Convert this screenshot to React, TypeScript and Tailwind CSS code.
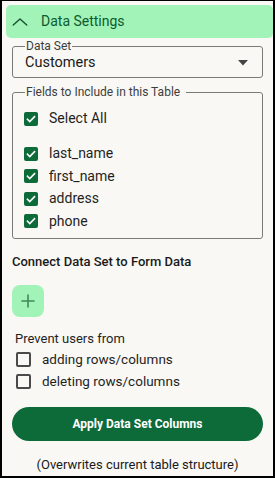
import { useState } from "react";

type Field = {
  name: string;
  checked: boolean;
};

function CheckBox({ checked }: { checked: boolean }) {
  if (checked) {
    return (
      <span className="flex h-[14px] w-[14px] items-center justify-center rounded-[2px] bg-[#0d6b3a]">
        <svg width="12" height="12" viewBox="0 0 24 24" fill="none" stroke="white" strokeWidth="3.2" strokeLinecap="square">
          <path d="M5 12.5l4.5 4.5L19 7.5" />
        </svg>
      </span>
    );
  }
  return <span className="block h-[15px] w-[15px] rounded-[2px] border-2 border-[#4a4a4a] bg-transparent" />;
}

function App() {
  const [fields] = useState<Field[]>([
    { name: "last_name", checked: true },
    { name: "first_name", checked: true },
    { name: "address", checked: true },
    { name: "phone", checked: true },
  ]);

  return (
    <div className="h-[478px] w-[275px] border-t border-l-2 border-r-2 border-b-2 border-black bg-[#f9f8f4] font-['Roboto',sans-serif] text-[#1f1f1f]">
      {/* cabecera */}
      <div className="ml-[4px] mt-[4px] flex h-[33px] items-center rounded-[5px] bg-[#a1f3b7] pl-[5px] text-[#0d5a30]">
        <svg width="18" height="18" viewBox="0 0 24 24" fill="none" stroke="#1b4d33" strokeWidth="1.8" strokeLinecap="round" strokeLinejoin="round">
          <path d="M3 16l9-8 9 8" />
        </svg>
        <span className="ml-[12px] text-[14px]">Data Settings</span>
      </div>

      <div className="px-[10px]">
        <fieldset className="mt-[2px] h-[38px] rounded-[3px] border border-[#7a7a77] pl-[12px] pr-[14px]">
          <legend className="px-[1px] text-[12px] leading-[12px] text-[#3d3d3d]">Data Set</legend>
          <div className="flex items-center justify-between">
            <span className="text-[14.5px] text-[#1a1a1a]">Customers</span>
            <svg width="10" height="6" viewBox="0 0 10 6">
              <path d="M0 0h10L5 5.5z" fill="#444" />
            </svg>
          </div>
        </fieldset>

        <fieldset className="mt-[8px] rounded-[3px] border border-[#7a7a77] pb-[9px] pl-[11px] pr-[10px]">
          <legend className="ml-[1px] px-[1px] pr-[6px] text-[12px] leading-[12px] text-[#3d3d3d]">Fields to Include in this Table</legend>
          <div className="mt-[10px] flex items-center gap-[11px]">
            <CheckBox checked={true} />
            <span className="text-[14px]">Select All</span>
          </div>
          <div className="mt-[17px] flex flex-col gap-[7.5px]">
            {fields.map((f) => (
              <div key={f.name} className="flex h-[15px] items-center gap-[11px]">
                <CheckBox checked={f.checked} />
                <span className="text-[14px]">{f.name}</span>
              </div>
            ))}
          </div>
        </fieldset>

        <p className="mt-[13px] text-[13px] font-medium text-[#1a1a1a]">Connect Data Set to Form Data</p>

        <button className="mt-[14px] flex h-[32px] w-[32px] items-center justify-center rounded-[8px] bg-[#a1f3b7]">
          <svg width="16" height="16" viewBox="0 0 24 24" fill="none" stroke="#3f8a5a" strokeWidth="2.4" strokeLinecap="round">
            <path d="M12 3v18M3 12h18" />
          </svg>
        </button>

        <p className="ml-[3px] mt-[12px] text-[13px]">Prevent users from</p>
        <div className="ml-[4px] mt-[3px] flex flex-col gap-[7px]">
          <div className="flex h-[15px] items-center gap-[11px]">
            <CheckBox checked={false} />
            <span className="text-[13.5px]">adding rows/columns</span>
          </div>
          <div className="flex h-[15px] items-center gap-[11px]">
            <CheckBox checked={false} />
            <span className="text-[13.5px]">deleting rows/columns</span>
          </div>
        </div>

        <button className="mt-[18px] flex h-[34px] w-full items-center justify-center rounded-full bg-[#0d6b3a] text-[12px] font-bold text-white">
          Apply Data Set Columns
        </button>

        <p className="mt-[14px] text-center text-[13px] text-[#1a1a1a]">(Overwrites current table structure)</p>
      </div>
    </div>
  );
}

export default App;
